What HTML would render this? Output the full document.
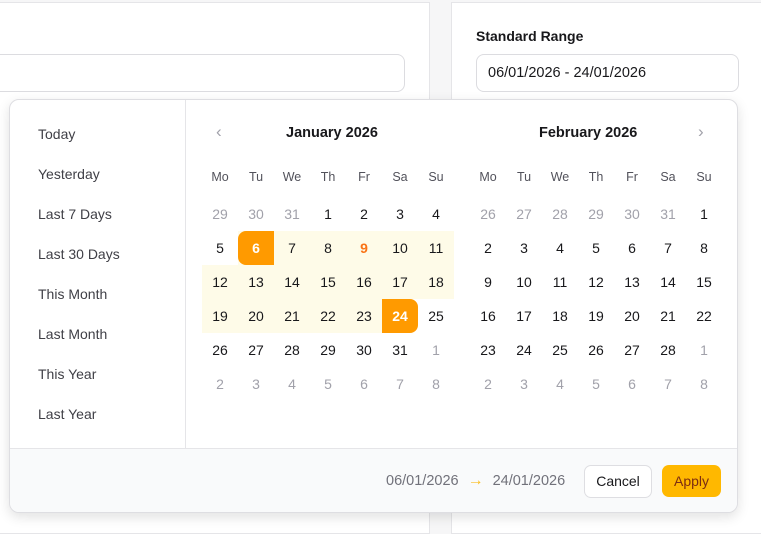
<!DOCTYPE html><html><head><style>
body{margin:0;width:761px;height:522px;overflow:hidden;background:#f6f6f7;font-family:"Liberation Sans",sans-serif;position:relative}
.p{position:absolute;background:#fff;border:1px solid #e5e5e8}
.inp{position:absolute;border:1px solid #dcdce0;border-radius:8px;background:#fff;box-sizing:border-box}
.pop{position:absolute;left:9px;top:99px;width:729px;height:414px;background:#fff;border:1px solid #dedee2;border-radius:10px;box-shadow:0 4px 12px rgba(0,0,0,.12);overflow:hidden;box-sizing:border-box}
.side{position:absolute;left:0;top:0;width:175px;height:349px;border-right:1px solid #e5e5e8}
.side div{position:absolute;left:28px;font-size:14px;color:#3f3f46}
.foot{position:absolute;left:0;top:348px;width:100%;height:66px;background:#f9fafb;border-top:1px solid #e5e5e8}
.c{position:absolute;width:36px;height:34px;line-height:34px;text-align:center;font-size:14px;color:#18181b}
.g{color:#a1a1aa}.h{color:#52525b;font-size:12.5px}
.hl{position:absolute;background:#fefbe8}
.sel{background:#ff9a00;color:#fff;font-weight:bold}
</style></head><body>
<div class="p" style="left:-2px;top:2px;width:430px;height:530px"></div>
<div class="p" style="left:451px;top:2px;width:320px;height:530px"></div>
<div class="inp" style="left:-10px;top:54px;width:415px;height:38px"></div>
<div style="position:absolute;left:476px;top:28px;font-size:14px;font-weight:bold;color:#18181b">Standard Range</div>
<div class="inp" style="left:476px;top:54px;width:263px;height:38px;font-size:14.5px;color:#18181b;padding:10px 0 0 11px">06/01/2026 - 24/01/2026</div>
<div class="pop">
<div class="side">
<div style="top:26px">Today</div><div style="top:66px">Yesterday</div><div style="top:106px">Last 7 Days</div><div style="top:146px">Last 30 Days</div><div style="top:186px">This Month</div><div style="top:226px">Last Month</div><div style="top:266px">This Year</div><div style="top:306px">Last Year</div>
</div>
<div style="position:absolute;left:206px;top:22px;font-size:17px;color:#a1a1aa">‹</div>
<div style="position:absolute;left:276px;top:25px;font-size:14.5px;font-weight:bold;color:#18181b">January 2026</div>
<div style="position:absolute;left:529px;top:25px;font-size:14.5px;font-weight:bold;color:#18181b">February 2026</div>
<div style="position:absolute;left:688px;top:22px;font-size:17px;color:#a1a1aa">›</div>
<div class="hl" style="left:228px;top:131px;width:216px;height:34px"></div>
<div class="hl" style="left:192px;top:165px;width:252px;height:34px"></div>
<div class="hl" style="left:192px;top:199px;width:180px;height:34px"></div>
<div id="cal"></div>
<div class="foot">
<div style="position:absolute;left:376px;top:23px;font-size:14.5px;color:#71717a;white-space:nowrap">06/01/2026<span style="color:#fbbf24;margin:0 9px;font-size:16px">→</span>24/01/2026</div>
<div style="position:absolute;left:574px;top:16px;width:66px;height:31px;border:1px solid #dedee2;border-radius:7px;background:#fff;font-size:14px;color:#18181b;text-align:center;line-height:31px">Cancel</div>
<div style="position:absolute;left:652px;top:16px;width:59px;height:32px;border-radius:7px;background:#ffb800;font-size:14px;color:#7c2d12;text-align:center;line-height:32px">Apply</div>
</div>
</div>
<script>
var o='',d=['Mo','Tu','We','Th','Fr','Sa','Su'];
function m(x,rows){d.forEach(function(t,i){o+='<div class="c h" style="left:'+(x+i*36)+'px;top:60px">'+t+'</div>'});
rows.forEach(function(r,ri){r.forEach(function(v,i){var cl='c';if(v[1])cl+=' '+v[1];o+='<div class="'+cl+'" style="left:'+(x+i*36)+'px;top:'+(97+ri*34)+'px'+(v[2]||'')+'">'+v[0]+'</div>'})})}
function mk(a){return a.map(function(r){return r.map(function(v){return typeof v=='object'?v:[v]})})}
m(192,mk([[[29,'g'],[30,'g'],[31,'g'],1,2,3,4],[5,[6,'sel',';border-radius:8px 0 0 8px'],7,8,[9,'',';color:#f97316;font-weight:bold'],10,11],[12,13,14,15,16,17,18],[19,20,21,22,23,[24,'sel',';border-radius:0 8px 8px 0'],25],[26,27,28,29,30,31,[1,'g']],[[2,'g'],[3,'g'],[4,'g'],[5,'g'],[6,'g'],[7,'g'],[8,'g']]]));
m(460,mk([[[26,'g'],[27,'g'],[28,'g'],[29,'g'],[30,'g'],[31,'g'],1],[2,3,4,5,6,7,8],[9,10,11,12,13,14,15],[16,17,18,19,20,21,22],[23,24,25,26,27,28,[1,'g']],[[2,'g'],[3,'g'],[4,'g'],[5,'g'],[6,'g'],[7,'g'],[8,'g']]]));
document.getElementById('cal').innerHTML=o;
</script>
</body></html>
